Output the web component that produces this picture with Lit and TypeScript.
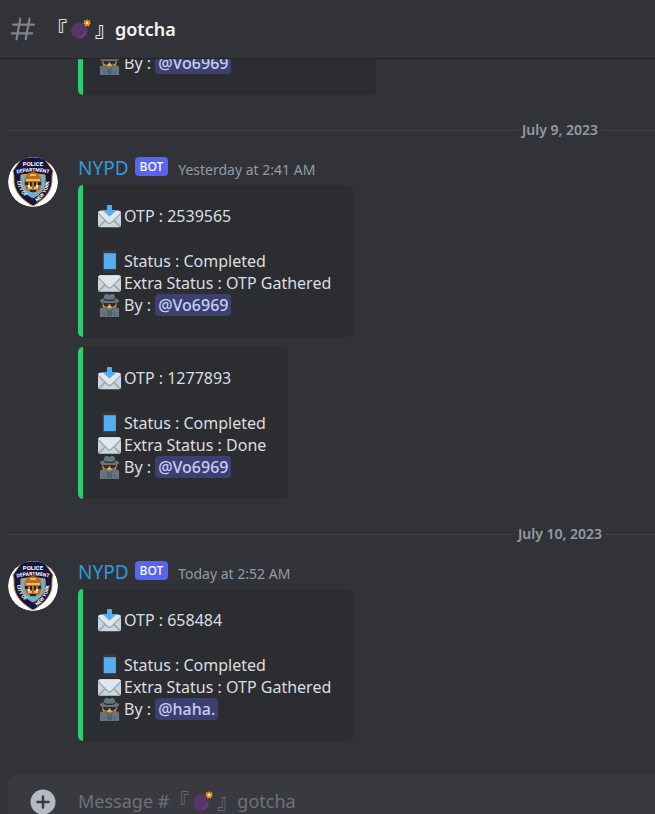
import { LitElement, html, css, svg, nothing } from "lit";
import { customElement, property } from "lit/decorators.js";

interface Otp {
  code?: string;
  extra?: string;
  by: string;
}

interface Message {
  time: string;
  embeds: Otp[];
}

interface Day {
  date: string;
  messages: Message[];
}

const earlier: Otp = { by: "@Vo6969" };

const days: Day[] = [
  {
    date: "July 9, 2023",
    messages: [
      {
        time: "Yesterday at 2:41 AM",
        embeds: [
          { code: "2539565", extra: "OTP Gathered", by: "@Vo6969" },
          { code: "1277893", extra: "Done", by: "@Vo6969" },
        ],
      },
    ],
  },
  {
    date: "July 10, 2023",
    messages: [
      {
        time: "Today at 2:52 AM",
        embeds: [{ code: "658484", extra: "OTP Gathered", by: "@haha." }],
      },
    ],
  },
];

const envelopeBody = svg`
  <path fill="#ccd6dd" d="M36 27a4 4 0 0 1-4 4H4a4 4 0 0 1-4-4V9a4 4 0 0 1 4-4h28a4 4 0 0 1 4 4v18z"/>
  <path fill="#99aab5" d="M12 17.3 1 28.300a1 1 0 0 0 0 1.300L2.400 31 13.900 19.300zM24 17.300l-2 2L33.600 31l1.400-1.400a1 1 0 0 0 0-1.300z"/>
  <path fill="#99aab5" d="M32 5H4a4 4 0 0 0-4 4v1l14.500 14.500a5 5 0 0 0 7 0L36 10V9a4 4 0 0 0-4-4z"/>
  <path fill="#e1e8ed" d="M32 5H4a4 4 0 0 0-3.700 2.600l14.900 14.800a4 4 0 0 0 5.700 0L35.700 7.600A4 4 0 0 0 32 5z"/>`;

const envelope = html`<svg viewBox="0 0 36 36" aria-hidden="true">${envelopeBody}</svg>`;

const inbox = html`<svg viewBox="0 0 36 36" aria-hidden="true">
  <g transform="translate(0 4)">${envelopeBody}</g>
  <path fill="#55acee" d="M27.500 8H22V1a1 1 0 0 0-1-1h-6a1 1 0 0 0-1 1v7H8.500a.6.6 0 0 0-.5 1l9.300 8.700a1 1 0 0 0 1.400 0L28 9a.6.6 0 0 0-.5-1z"/>
</svg>`;

const phone = html`<svg viewBox="0 0 36 36" aria-hidden="true">
  <rect x="7" y="0" width="22" height="36" rx="3" fill="#31373d"/>
  <rect x="9" y="5" width="19" height="25" fill="#55acee"/>
</svg>`;

const spy = html`<svg viewBox="0 0 36 36" aria-hidden="true">
  <path fill="#ffac33" d="M7 11h22v5c0 3-2 6-4 7H11c-2-1-4-4-4-7z"/>
  <path fill="#66757f" d="M3 36V25c0-2 1-4 4-4l5-1 6 3 6-3 5 1c3 0 4 2 4 4v11z"/>
  <path fill="#525e67" d="M12 22l3 6-2 3 4 5h2l-1-9zM24 22l-3 6 2 3-3 5h-2v-9zM9 28h1v8H9zM26 28h1v8h-1z"/>
  <path fill="#292f33" d="M8 13h20v2c0 3-2 5-5 5s-4-2-4-4h-2c0 2-1 4-4 4s-5-2-5-5z"/>
  <path fill="#66757f" d="M3 11c0-2 3-4 6-4 0-4 2-7 4-7 2 0 3 1 5 1s3-1 5-1c2 0 4 3 4 7 3 0 6 2 6 4 0 3-7 3-15 3S3 14 3 11z"/>
  <path fill="#292f33" d="M9 7c2 1 5 2 9 2s7-1 9-2v2c-2 2-5 2-9 2s-7 0-9-2z"/>
</svg>`;

const bomb = html`<svg viewBox="0 0 36 36" aria-hidden="true">
  <circle cx="15" cy="21" r="15" fill="#553765"/>
  <path fill="#553765" d="M21 8l7 7-3 3-7-7z"/>
  <path fill="none" stroke="#744eaa" stroke-width="1.500" stroke-linecap="round" d="M26 23c-1 5-4 8-9 9"/>
  <path fill="#f4900c" d="M29 0l2 3 4-1-1 4 2 2-3 2v4l-4-2-3 2-1-4-3-1 2-3-1-4 4 1z"/>
  <circle cx="29" cy="7" r="2" fill="#fff"/>
</svg>`;

const hash = html`<svg viewBox="0 0 24 24" aria-hidden="true">
  <path fill="none" stroke="#80848e" stroke-width="2" stroke-linecap="round" d="M9.500 2.500 6 21.500M18 2.500l-3.500 19M3 8h19M1.500 16h19"/>
</svg>`;

const plus = html`<svg viewBox="0 0 26 26" aria-hidden="true">
  <circle cx="13" cy="13" r="12.500" fill="#b5bac1"/>
  <path stroke="#383a40" stroke-width="2.500" stroke-linecap="round" d="M13 7.500v11M7.500 13h11"/>
</svg>`;

const avatar = html`<svg class="avatar" viewBox="0 0 50 50" role="img" aria-label="NYPD">
  <defs>
    <clipPath id="disc"><circle cx="25" cy="25" r="25"/></clipPath>
    <path id="top" d="M7 17Q25 12 43 17"/>
    <path id="left" d="M9 24C10 33 14 38 22 44"/>
    <path id="right" d="M29 45C36 40 41 33 42 20"/>
  </defs>
  <g clip-path="url(#disc)">
    <circle cx="25" cy="25" r="25" fill="#fff"/>
    <path fill="#14163f" stroke="#c98a2c" stroke-width="1" d="M14 1Q25-1 36 1L45 14C43 19 45 24 43 30 40 39 32 45 25 49 18 45 10 39 7 30 5 24 7 19 5 14z"/>
    <path fill="#5bb4e4" stroke="#d9983a" stroke-width="1" d="M13 18Q25 15 37 18C38 29 34 37 25 41 16 37 12 29 13 18z"/>
    <path fill="#b86e1d" d="M17 20l4-4 4-1 4 1 4 4 1 6-2 7-7 3-7-3-2-7z"/>
    <path fill="#f0b85b" d="M18 22h14v2H18zM20 30h4v2h-4zM26 30h4v2h-4zM22 17h6v2h-6z"/>
    <path fill="#25233b" d="M17 25h3v3h-3zM22 25h2v4h-2zM26 25h2v4h-2zM30 25h3v3h-3zM22 33h6v2h-6z"/>
    <path fill="#fff" d="M20 28h2v2h-2zM28 28h2v2h-2z"/>
    <g fill="#fff" font-family="Roboto, sans-serif" font-weight="700">
      <text x="25" y="9" font-size="6" text-anchor="middle">POLICE</text>
      <text font-size="5" text-anchor="middle"><textPath href="#top" startOffset="50%">DEPARTMENT</textPath></text>
      <text font-size="5"><textPath href="#left">CITY OF</textPath></text>
      <text font-size="5"><textPath href="#right">NEW YORK</textPath></text>
    </g>
  </g>
</svg>`;

@customElement("otp-embed")
export class OtpEmbed extends LitElement {
  @property({ attribute: false }) otp!: Otp;

  static styles = css`
    :host {
      display: block;
      width: fit-content;
      box-sizing: border-box;
      padding: 20px 22px 21px 15px;
      border-left: 5px solid #2ecc71;
      border-radius: 5px;
      background: #2b2d31;
      color: #dbdee1;
      font-size: 16px;
      line-height: 22px;
    }
    .row {
      display: flex;
      align-items: center;
      gap: 3px;
      height: 22px;
      white-space: pre;
    }
    .first {
      margin-bottom: 23px;
    }
    svg {
      flex: none;
      width: 23px;
      height: 23px;
    }
    .mention {
      padding: 0 3px;
      border-radius: 4px;
      background: #3c4070;
      color: #c9cdfb;
      font-weight: 500;
      line-height: 24px;
      text-decoration: none;
    }
  `;

  render() {
    const { code, extra, by } = this.otp;
    return html`
      ${code
        ? html`
            <div class="row first">${inbox}<span>OTP : ${code}</span></div>
            <div class="row">${phone}<span>Status : Completed</span></div>
            <div class="row">${envelope}<span>Extra Status : ${extra}</span></div>
          `
        : nothing}
      <div class="row">${spy}<span>By : <a class="mention" href="#">${by}</a></span></div>
    `;
  }
}

@customElement("chat-message")
export class ChatMessage extends LitElement {
  @property({ attribute: false }) message!: Message;

  static styles = css`
    :host {
      display: flex;
      gap: 20px;
      padding-left: 8px;
    }
    .avatar {
      flex: none;
      width: 50px;
      height: 50px;
    }
    .head {
      display: flex;
      align-items: center;
      height: 22px;
      margin-bottom: 6px;
    }
    .name {
      color: #3498db;
      font-size: 19px;
      line-height: 22px;
    }
    .bot {
      align-self: flex-start;
      margin: 0 10px 0 6px;
      padding: 0 5px;
      border-radius: 4px;
      background: #5865f2;
      color: #fff;
      font-size: 12px;
      font-weight: 500;
      line-height: 19px;
    }
    .time {
      padding-top: 4px;
      color: #949ba4;
      font-size: 14px;
      line-height: 18px;
    }
    .embeds {
      display: grid;
      gap: 10px;
    }
  `;

  render() {
    const { time, embeds } = this.message;
    return html`
      ${avatar}
      <div>
        <div class="head">
          <span class="name">NYPD</span>
          <span class="bot">BOT</span>
          <time class="time">${time}</time>
        </div>
        <div class="embeds">
          ${embeds.map((otp) => html`<otp-embed .otp=${otp}></otp-embed>`)}
        </div>
      </div>
    `;
  }
}

@customElement("app-root")
export class AppRoot extends LitElement {
  static styles = css`
    :host {
      display: flex;
      flex-direction: column;
      height: 100vh;
      overflow: hidden;
      background: #313338;
      font-family: "Noto Sans", "Noto Sans CJK JP", sans-serif;
    }
    .header {
      z-index: 1;
      flex: none;
      display: flex;
      align-items: center;
      gap: 11px;
      height: 58px;
      padding-left: 10px;
      background: #313338;
      box-shadow: 0 1px 1px #232428;
    }
    .header > svg {
      width: 26px;
      height: 26px;
    }
    .title {
      margin: 0;
      color: #f2f3f5;
      font-size: 18px;
      font-weight: 600;
    }
    .channel {
      display: flex;
      align-items: center;
      line-height: 26px;
    }
    .channel svg {
      width: 20px;
      height: 20px;
      margin: 0 4px;
    }
    .bracket {
      font-family: "Noto Sans CJK JP", sans-serif;
      font-size: 20px;
    }
    .title .bracket {
      font-weight: 700;
    }
    .log {
      flex: 1;
      min-height: 0;
      overflow: hidden;
      display: flex;
      flex-direction: column;
      justify-content: flex-end;
      padding-bottom: 33px;
    }
    .log > * {
      flex: none;
    }
    .earlier {
      min-width: 298px;
      margin-left: 78px;
    }
    .divider {
      display: flex;
      align-items: center;
      height: 18px;
      margin: 26px 0 18px 8px;
      color: #949ba4;
      font-size: 14px;
      font-weight: 600;
      line-height: 18px;
    }
    .rule {
      flex: 1;
      height: 1px;
      background: #3f4147;
    }
    .date {
      display: flex;
      align-items: center;
      gap: 4px;
      width: 190px;
    }
    .composer {
      flex: none;
      display: flex;
      align-items: flex-start;
      gap: 22px;
      height: 40px;
      margin-left: 8px;
      padding-left: 22px;
      border-radius: 10px 0 0 0;
      box-sizing: border-box;
      overflow: hidden;
      background: #383a40;
    }
    .add {
      flex: none;
      width: 26px;
      height: 26px;
      margin-top: 15px;
      padding: 0;
      border: 0;
      background: none;
    }
    .add svg {
      display: block;
    }
    .field {
      flex: 1;
      display: grid;
      margin-top: 14px;
    }
    .field > * {
      grid-area: 1 / 1;
    }
    .hint {
      color: #6d717a;
      font-size: 18px;
      white-space: pre;
    }
    .text {
      border: 0;
      outline: 0;
      padding: 0;
      background: none;
      color: #dbdee1;
      font: inherit;
      font-size: 18px;
    }
  `;

  private channel(prefix: unknown = nothing) {
    return html`${prefix}<span class="bracket">『</span>${bomb}<span class="bracket">』</span><span>gotcha</span>`;
  }

  render() {
    return html`
      <header class="header">
        ${hash}
        <h1 class="title channel">${this.channel()}</h1>
      </header>
      <main class="log">
        <otp-embed class="earlier" .otp=${earlier}></otp-embed>
        ${days.map(
          (day) => html`
            <div class="divider">
              <span class="rule"></span>
              <span class="date"><span class="rule"></span>${day.date}<span class="rule"></span></span>
            </div>
            ${day.messages.map((m) => html`<chat-message .message=${m}></chat-message>`)}
          `
        )}
      </main>
      <form class="composer">
        <button class="add" type="button" aria-label="Add attachment">${plus}</button>
        <div class="field">
          <label class="hint channel" for="text">${this.channel(html`<span>Message #</span>`)}</label>
          <input class="text" id="text" type="text" autocomplete="off" />
        </div>
      </form>
    `;
  }
}
